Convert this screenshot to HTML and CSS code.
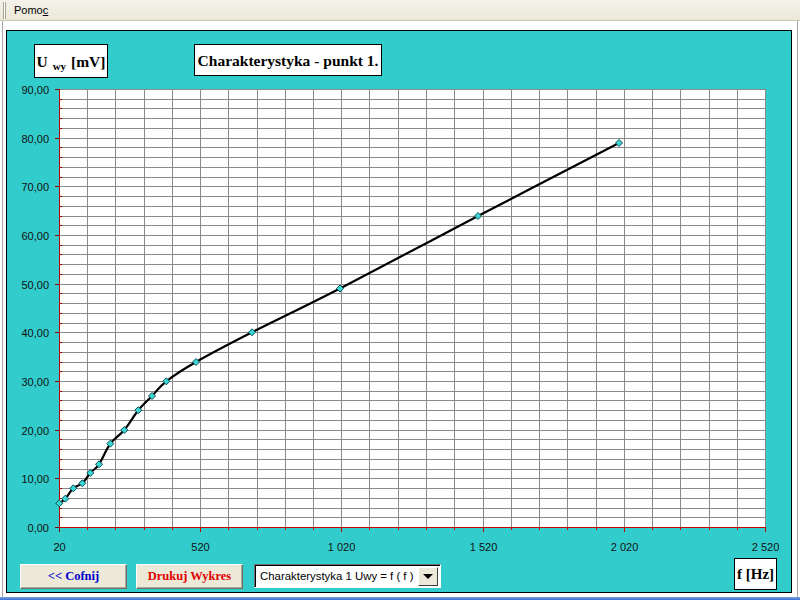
FILE: index.html
```html
<!DOCTYPE html>
<html>
<head>
<meta charset="utf-8">
<title>Charakterystyka</title>
<link rel="stylesheet" href="styles.css">
</head>
<body>
<div class="menubar">
  <span class="grip"></span>
  <span class="menu-item">Pomo<u>c</u></span>
</div>
<div class="client">
  <div class="panel">
    <div class="header">
      <div class="lbox ulabel"><span>U <sub>wy</sub>&nbsp;[mV]</span></div>
      <div class="lbox title">Charakterystyka - punkt 1.</div>
    </div>
    <svg class="chart" viewBox="7 78 784 478" width="784" height="478" xmlns="http://www.w3.org/2000/svg">
      <defs>
        <path id="m" d="M0 -3.5L3.5 0L0 3.5L-3.5 0Z"/>
      </defs>
      <rect x="59" y="89" width="707" height="438" fill="#fff"/>
      <path class="grid" d="M60 89.5H765M60 99.5H765M60 108.5H765M60 118.5H765M60 128.5H765M60 138.5H765M60 147.5H765M60 157.5H765M60 167.5H765M60 177.5H765M60 186.5H765M60 196.5H765M60 206.5H765M60 216.5H765M60 225.5H765M60 235.5H765M60 245.5H765M60 254.5H765M60 264.5H765M60 274.5H765M60 284.5H765M60 293.5H765M60 303.5H765M60 313.5H765M60 323.5H765M60 332.5H765M60 342.5H765M60 352.5H765M60 362.5H765M60 371.5H765M60 381.5H765M60 391.5H765M60 400.5H765M60 410.5H765M60 420.5H765M60 430.5H765M60 439.5H765M60 449.5H765M60 459.5H765M60 469.5H765M60 478.5H765M60 488.5H765M60 498.5H765M60 508.5H765M60 517.5H765
      M87.5 89V527M115.5 89V527M144.5 89V527M172.5 89V527M200.5 89V527M228.5 89V527M257.5 89V527M285.5 89V527M313.5 89V527M341.5 89V527M369.5 89V527M398.5 89V527M426.5 89V527M454.5 89V527M483.5 89V527M511.5 89V527M539.5 89V527M567.5 89V527M596.5 89V527M624.5 89V527M652.5 89V527M680.5 89V527M709.5 89V527M737.5 89V527M765.5 89V527"/>
      <path class="axis" d="M59.5 89V528M59 527.5H766
      M60 99.5H62M60 108.5H62M60 118.5H62M60 128.5H62M60 147.5H62M60 157.5H62M60 167.5H62M60 177.5H62M60 196.5H62M60 206.5H62M60 216.5H62M60 225.5H62M60 245.5H62M60 254.5H62M60 264.5H62M60 274.5H62M60 293.5H62M60 303.5H62M60 313.5H62M60 323.5H62M60 342.5H62M60 352.5H62M60 362.5H62M60 371.5H62M60 391.5H62M60 400.5H62M60 410.5H62M60 420.5H62M60 439.5H62M60 449.5H62M60 459.5H62M60 469.5H62M60 488.5H62M60 498.5H62M60 508.5H62M60 517.5H62
      M87.5 528V530M115.5 528V530M144.5 528V530M172.5 528V530M228.5 528V530M257.5 528V530M285.5 528V530M313.5 528V530M369.5 528V530M398.5 528V530M426.5 528V530M454.5 528V530M511.5 528V530M539.5 528V530M567.5 528V530M596.5 528V530M652.5 528V530M680.5 528V530M709.5 528V530M737.5 528V530
      M200.5 528V532M341.5 528V532M483.5 528V532M624.5 528V532M765.5 528V532"/>
      <path class="axis-major" d="M55 89.5H59M55 138.5H59M55 186.5H59M55 235.5H59M55 284.5H59M55 332.5H59M55 381.5H59M55 430.5H59M55 478.5H59M55 527.5H59M59.5 528V532"/>
      <path class="curve" d="M59.3 503.3C60.3 502.53 62.97 501.2 65.3 498.7C67.63 496.2 70.47 490.87 73.3 488.3C76.13 485.73 79.47 485.85 82.3 483.3C85.13 480.75 87.52 476.17 90.3 473C93.08 469.83 95.67 469.18 99 464.3C102.33 459.42 106.08 449.42 110.3 443.7C114.52 437.98 119.63 435.58 124.3 430C128.97 424.42 133.68 415.87 138.3 410.2C142.92 404.53 147.33 400.82 152 396C156.67 391.18 158.97 386.97 166.3 381.3C173.63 375.63 181.72 370.17 196 362C210.28 353.83 228 344.55 252 332.3C276 320.05 302.33 307.88 340 288.5C377.67 269.12 431.5 240.25 478 216C524.5 191.75 595.5 155.17 619 143"/>
      <g class="markers">
        <use href="#m" x="59.3" y="503.3"/>
        <use href="#m" x="65.3" y="498.7"/>
        <use href="#m" x="73.3" y="488.3"/>
        <use href="#m" x="82.3" y="483.3"/>
        <use href="#m" x="90.3" y="473"/>
        <use href="#m" x="99" y="464.3"/>
        <use href="#m" x="110.3" y="443.7"/>
        <use href="#m" x="124.3" y="430"/>
        <use href="#m" x="138.3" y="410.2"/>
        <use href="#m" x="152" y="396"/>
        <use href="#m" x="166.3" y="381.3"/>
        <use href="#m" x="196" y="362"/>
        <use href="#m" x="252" y="332.3"/>
        <use href="#m" x="340" y="288.5"/>
        <use href="#m" x="478" y="216"/>
        <use href="#m" x="619" y="143"/>
      </g>
      <g class="ylabels">
        <text x="49" y="93.5">90,00</text>
        <text x="49" y="142.5">80,00</text>
        <text x="49" y="190.5">70,00</text>
        <text x="49" y="239.5">60,00</text>
        <text x="49" y="288.5">50,00</text>
        <text x="49" y="336.5">40,00</text>
        <text x="49" y="385.5">30,00</text>
        <text x="49" y="434.5">20,00</text>
        <text x="49" y="482.5">10,00</text>
        <text x="49" y="531.5">0,00</text>
      </g>
      <g class="xlabels">
        <text x="59.5" y="551">20</text>
        <text x="200.5" y="551">520</text>
        <text x="341.5" y="551">1 020</text>
        <text x="483.5" y="551">1 520</text>
        <text x="624.5" y="551">2 020</text>
        <text x="765.5" y="551">2 520</text>
      </g>
    </svg>
    <div class="footer">
      <button class="btn btn-back">&lt;&lt; Cofnij</button>
      <button class="btn btn-print">Drukuj Wykres</button>
      <div class="combo">
        <span class="combo-text">Charakterystyka 1 Uwy = f ( f )</span>
        <span class="combo-arrow"><span class="tri"></span></span>
      </div>
      <div class="lbox fbox">f [Hz]</div>
    </div>
  </div>
</div>
<div class="taskbar"></div>
</body>
</html>
```

FILE: styles.css
```css
html, body {
  margin: 0;
  padding: 0;
}
body {
  width: 800px;
  height: 600px;
  overflow: hidden;
  background: #fff;
  font-family: "Liberation Sans", Arial, sans-serif;
}
.menubar {
  height: 20px;
  background: linear-gradient(#F4F2EA, #ECE9D8);
  border-bottom: 1px solid #C9C6B6;
  display: flex;
  align-items: center;
  font-size: 11px;
  color: #000;
}
.grip {
  width: 1px;
  height: 17px;
  margin-left: 3px;
  border-left: 1px solid #A8A593;
  border-right: 1px solid #A8A593;
  background: #fff;
}
.menu-item {
  margin-left: 8px;
}
.client {
  margin: 0 2px;
  height: 576px;
  box-sizing: border-box;
  border-left: 1px solid #A7A6A0;
  border-right: 1px solid #A7A6A0;
  padding: 9px 0 4px 3px;
}
.panel {
  width: 786px;
  height: 563px;
  box-sizing: border-box;
  border: 1px solid #000;
  background: #33CCCC;
  display: flex;
  flex-direction: column;
}
.header {
  height: 47px;
  flex: none;
  box-sizing: border-box;
  padding: 13px 0 0 27px;
  display: flex;
  align-items: flex-start;
  gap: 86px;
}
.lbox {
  background: #fff;
  border: 1px solid #000;
  box-sizing: border-box;
  font-family: "Liberation Serif", "Times New Roman", serif;
  font-weight: bold;
  font-size: 15.5px;
  color: #000;
  display: flex;
  align-items: center;
  justify-content: center;
  white-space: nowrap;
}
.ulabel {
  width: 74px;
  height: 34px;
  padding-top: 2px;
}
.ulabel sub {
  font-size: 11px;
  vertical-align: -3px;
  line-height: 0;
  padding: 0 1px;
}
.title {
  width: 188px;
  height: 32px;
  padding-top: 1px;
}
.chart {
  display: block;
  flex: none;
}
.grid {
  fill: none;
  stroke: #8A8A8A;
  stroke-width: 1;
  shape-rendering: crispEdges;
}
.axis {
  fill: none;
  stroke: #C00000;
  stroke-width: 1;
  shape-rendering: crispEdges;
}
.axis-major {
  fill: none;
  stroke: #8B0000;
  stroke-width: 1;
  shape-rendering: crispEdges;
}
.curve {
  fill: none;
  stroke: #000;
  stroke-width: 2.2;
  stroke-linejoin: round;
  stroke-linecap: round;
}
.markers {
  fill: #3CD6D6;
  stroke: #0B4F55;
  stroke-width: 1;
}
.ylabels text, .xlabels text {
  font-family: "Liberation Sans", Arial, sans-serif;
  font-size: 11px;
  fill: #111;
}
.ylabels text {
  text-anchor: end;
}
.xlabels text {
  text-anchor: middle;
}
.footer {
  flex: 1;
  display: flex;
  align-items: flex-start;
  padding-left: 13px;
}
.btn {
  margin: 8px 0 0 0;
  width: 107px;
  height: 25px;
  padding: 0;
  box-sizing: border-box;
  background: #ECE9D8;
  border: 1px solid;
  border-color: #fff #716F64 #716F64 #fff;
  box-shadow: inset -1px -1px 0 #ACA899;
  font-family: "Liberation Serif", "Times New Roman", serif;
  font-weight: bold;
  font-size: 12.5px;
}
.btn-back {
  color: #0000CC;
}
.btn-print {
  margin-left: 9px;
  color: #E00000;
}
.combo {
  margin: 8px 0 0 11px;
  width: 187px;
  height: 24px;
  box-sizing: border-box;
  background: #fff;
  border: 1px solid;
  border-color: #6E6E6E #fff #fff #6E6E6E;
  box-shadow: inset 1px 1px 0 #000;
  display: flex;
  align-items: center;
  padding: 1px 2px 1px 5px;
}
.combo-text {
  flex: 1;
  font-size: 11.4px;
  color: #000;
  white-space: nowrap;
}
.combo-arrow {
  width: 20px;
  height: 19px;
  box-sizing: border-box;
  background: #ECE9D8;
  border: 1px solid;
  border-color: #fff #404040 #404040 #fff;
  display: flex;
  align-items: center;
  justify-content: center;
}
.tri {
  width: 0;
  height: 0;
  border-left: 5px solid transparent;
  border-right: 5px solid transparent;
  border-top: 5px solid #000;
}
.fbox {
  margin: 2px 14px 0 auto;
  width: 43px;
  height: 32px;
  font-size: 15px;
  padding-top: 1px;
}
.taskbar {
  height: 3px;
  background: linear-gradient(#7BA2E7, #3D71CC);
}
```
